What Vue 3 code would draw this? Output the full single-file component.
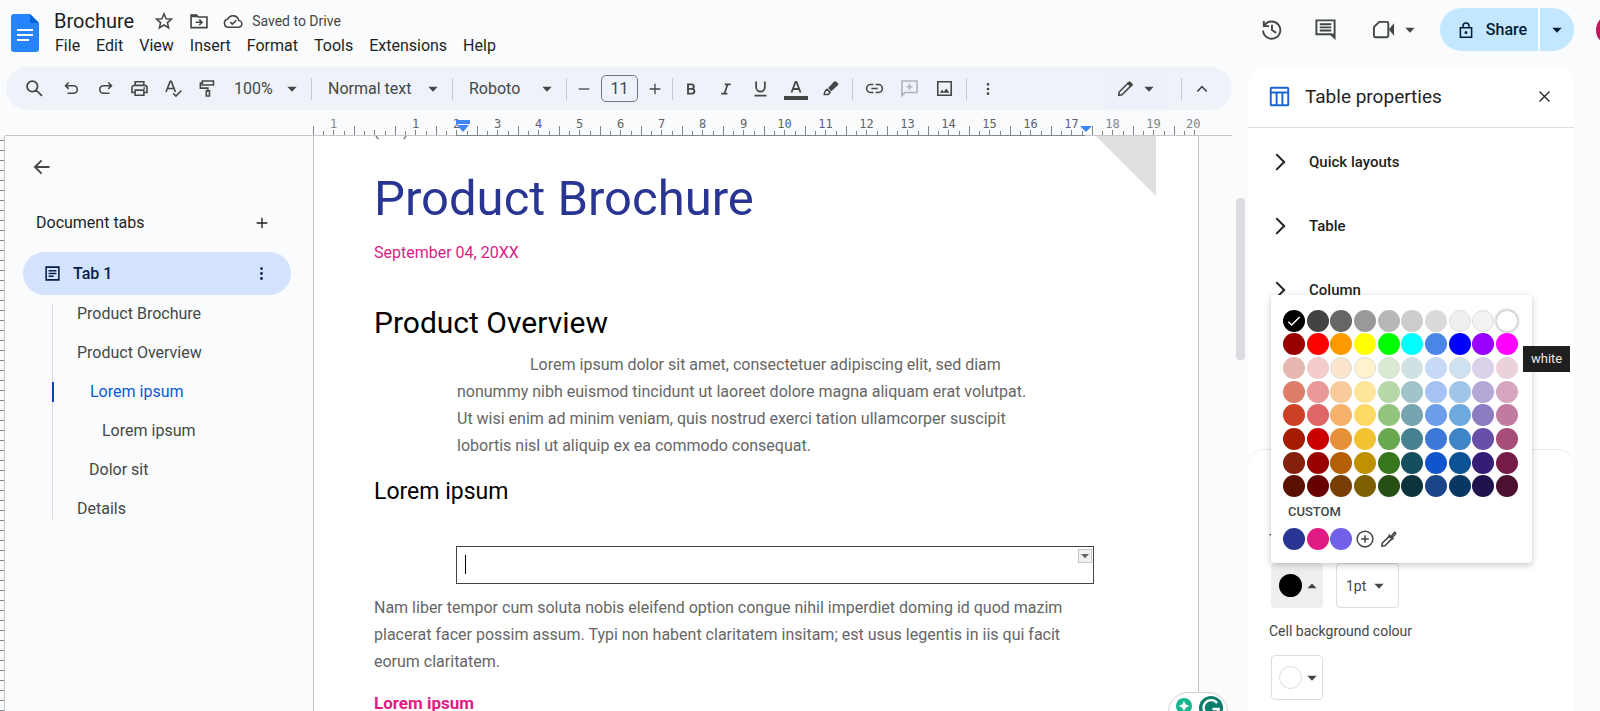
<script setup>
import { h, ref } from 'vue'

// Each glyph sits in a 24 unit box: s = stroked outline, f = filled shape, w = stroke width.
const glyphs = {
  star: { s: 'M12 3.2l2.5 6 6.500.5-4.900 4.200 1.500 6.300L12 16.800l-5.600 3.400 1.500-6.300L3 9.700l6.500-.5z', w: 1.8 },
  move: { s: 'M2.500 5h6.500l2 2.200h10.500v12.800h-19zM8 13.500h7M12.300 10.200l3.300 3.300-3.300 3.300', f: 'M2.500 4.500h7l2 3h-9z', w: 2 },
  cloud: { s: 'M7 19.500h11.500a4 4 0 0 0 .4-8A7 7 0 0 0 5.800 9.600 5 5 0 0 0 7 19.500zM8.800 13.300l2.500 2.500 4.700-4.700', w: 1.900 },
  search: { s: 'M9.500 3.500a6 6 0 1 1 0 12a6 6 0 1 1 0-12zM14 14l6.500 6.500', w: 2 },
  undo: { s: 'M8.500 4.500L4.500 8.500l4 4M5 8.500h9.500a4.800 4.800 0 0 1 0 9.600H7', w: 2 },
  redo: { s: 'M15.500 4.500l4 4-4 4M19 8.500H9.500a4.800 4.800 0 0 0 0 9.600H17', w: 2 },
  print: { s: 'M6.500 8V3.500h11V8M6.500 17H2.500V11a3 3 0 0 1 3-3h13a3 3 0 0 1 3 3v6h-4M6.500 14h11v6.500h-11z', f: 'M17 10.500h2v2h-2z', w: 2 },
  spell: { s: 'M2.500 16.500L7.800 3h1.400l5.300 13.500M4.500 12h8M11.500 18l3.500 3.500L22 14.500', w: 2 },
  paint: { s: 'M5.500 2.500h14v5h-14zM5.500 5H3v6.500h9.500V15M10.500 15h4v6.500h-4z', w: 2 },
  minus: { s: 'M4 12h16', w: 2 },
  plus: { s: 'M4 12h16M12 4v16', w: 2 },
  bold: { s: 'M7.500 5h5.300a3.300 3.300 0 0 1 0 6.800H7.500zM7.500 11.800h6a3.600 3.600 0 0 1 0 7.200h-6z', w: 2.800 },
  italic: { s: 'M10 5h9M5 19h9M14.500 5l-5 14', w: 2.600 },
  underline: { s: 'M6.500 3v7.500a5.500 5.500 0 0 0 11 0V3M4.500 21h15', w: 2.200 },
  colour: { s: 'M7.500 15.500L11.500 5h1l4 10.500M9 12h6', f: 'M0 19h24v4H0z', w: 1.800 },
  marker: { s: 'M4 19.500h5l2.500-2.500-4-4L5 15.500zM7.500 12.500l4 4', f: 'M9 11.500L16.500 3.200q1.200-1 2.500 0l2.300 2.300q1 1.200 0 2.500L13 15.500z', w: 1.800 },
  link: { s: 'M10.500 7H7a5 5 0 0 0 0 10h3.500M13.500 7H17a5 5 0 0 1 0 10h-3.500M8 12h8', w: 2 },
  addComment: { s: 'M2.500 2.500h19v14.500H6.500l-4 4zM12 6v7.500M8.200 9.800h7.600', w: 2 },
  image: { s: 'M3.500 3.500h17v17h-17z', f: 'M6 17.500l3-4 2.200 2.500 3-4 4 5.500z', w: 2 },
  dots: { f: 'M12 3a2 2 0 1 1 0 4a2 2 0 1 1 0-4zM12 10a2 2 0 1 1 0 4a2 2 0 1 1 0-4zM12 17a2 2 0 1 1 0 4a2 2 0 1 1 0-4z' },
  pencil: { s: 'M3.500 20.500l.5-4L16 4.500q1-1 2 0l1.500 1.500q1 1 0 2L7.500 20z', f: 'M14 6l3-3 4.500 4.500-3 3z', w: 2 },
  up: { s: 'M5 15.500l7-7 7 7', w: 2.400 },
  back: { s: 'M21 12H4M11.500 4L3.500 12l8 8', w: 2.200 },
  doc: { s: 'M3 3h18v18H3zM6.500 8h11M6.500 12h11M6.500 16h7', w: 2.200 },
  history: { s: 'M4.800 7.500A9 9 0 1 1 3.200 13M4 3v5.500h5.500M12.500 7v5.500l4.300 3', w: 2 },
  comment: { s: 'M2.500 2.500h19v18l-3.500-3.500h-15.500zM6 6.500h12M6 9.800h12M6 13h12', f: 'M21.500 22v-5.500h-6z', w: 2 },
  video: { s: 'M7.500 4H15.500a1.500 1.500 0 0 1 1.500 1.500v13a1.500 1.500 0 0 1-1.500 1.500H3.500a1.500 1.500 0 0 1-1.500-1.500V9.500z', f: 'M17.500 12l5.500-6.500v13z', w: 2 },
  lock: { s: 'M4.500 9h15v12.500h-15zM8 9V6.500a4 4 0 0 1 8 0V9', f: 'M12 13.200a2 2 0 1 1 0 4a2 2 0 1 1 0-4z', w: 2 },
  table: { s: 'M3 2h18a1 1 0 0 1 1 1v18a1 1 0 0 1-1 1H3a1 1 0 0 1-1-1V3a1 1 0 0 1 1-1zM2 7.500h20M8.700 7.500V22M15.300 7.500V22', w: 2.200 },
  close: { s: 'M4 4l16 16M20 4L4 20', w: 2 },
  right: { s: 'M7.500 2.500l9.500 9.500-9.500 9.500', w: 2.400 },
  check: { s: 'M3.500 13l5 5L20.500 6', w: 2.200 },
  add: { s: 'M12 1.500a10.500 10.500 0 1 1 0 21a10.500 10.500 0 1 1 0-21zM12 7v10M7 12h10', w: 2 },
  dropper: { s: 'M2.500 21.500l.5-4 9.500-9.500 3.500 3.500-9.500 9.500zM11.500 6l6.500 6.500M15 8.500l3.500-4.500q1.300-1.300 2.200-.4t-.5 2.400L16.500 10', w: 2.100 },
  caret: { f: 'M4 8h16l-8 8.500z' },
  caretUp: { f: 'M4 16h16L12 7.500z' },
}

const Icon = ({ name }) => {
  const g = glyphs[name]
  return h('svg', { viewBox: '0 0 24 24', 'aria-hidden': 'true' }, [
    g.f && h('path', { d: g.f, fill: 'currentColor' }),
    g.s && h('path', { d: g.s, fill: 'none', stroke: 'currentColor', 'stroke-width': g.w }),
  ])
}
Icon.props = ['name']

const menus = ['File', 'Edit', 'View', 'Insert', 'Format', 'Tools', 'Extensions', 'Help']
const editTools = [
  ['undo', 'Undo'], ['redo', 'Redo'], ['print', 'Print'], ['spell', 'Spelling'], ['paint', 'Paint format'],
]
const textTools = [
  ['bold', 'Bold'], ['italic', 'Italic'], ['underline', 'Underline'], ['colour', 'Text colour'], ['marker', 'Highlight colour'],
]
const insertTools = [['link', 'Insert link'], ['addComment', 'Add comment'], ['image', 'Insert image']]

const rulerLabels = ['1', '', ...Array.from({ length: 20 }, (_, i) => String(i + 1))]

const outline = [
  { text: 'Product Brochure', level: 1 },
  { text: 'Product Overview', level: 1 },
  { text: 'Lorem ipsum', level: 2, active: true },
  { text: 'Lorem ipsum', level: 3 },
  { text: 'Dolor sit', level: 2 },
  { text: 'Details', level: 1 },
]

const sections = ['Quick layouts', 'Table', 'Column']

const palette = `
000000 434343 666666 999999 b7b7b7 cccccc d9d9d9 efefef f3f3f3 ffffff
980000 ff0000 ff9900 ffff00 00ff00 00ffff 4a86e8 0000ff 9900ff ff00ff
e6b8af f4cccc fce5cd fff2cc d9ead3 d0e0e3 c9daf8 cfe2f3 d9d2e9 ead1dc
dd7e6b ea9999 f9cb9c ffe599 b6d7a8 a2c4c9 a4c2f4 9fc5e8 b4a7d6 d5a6bd
cc4125 e06666 f6b26b ffd966 93c47d 76a5af 6d9eeb 6fa8dc 8e7cc3 c27ba0
a61c00 cc0000 e69138 f1c232 6aa84f 45818e 3c78d8 3d85c6 674ea7 a64d79
85200c 990000 b45f06 bf9000 38761d 134f5c 1155cc 0b5394 351c75 741b47
5b0f00 660000 783f04 7f6000 274e13 0c343d 1c4587 073763 20124d 4c1130`
  .trim().split(/\s+/).map((c) => '#' + c)
const pale = ['#efefef', '#f3f3f3', '#fce5cd', '#fff2cc', '#d9ead3', '#cfe2f3']
const customColours = ['#283593', '#e01b84', '#7061e8']

const borderColour = ref('#000000')
const fontSize = ref('11')
</script>

<template>
  <div class="app">
    <header class="header">
      <svg class="logo" viewBox="0 0 28 38" aria-hidden="true">
        <path d="M3 0h16l9 9v26a3 3 0 0 1-3 3H3a3 3 0 0 1-3-3V3a3 3 0 0 1 3-3z" fill="#2684fc" />
        <path d="M19 0l9 9h-9z" fill="#0066da" />
        <path d="M6 16h16M6 21h16M6 26h12" stroke="#fff" stroke-width="2.200" />
      </svg>
      <div class="heading">
        <div class="title-row">
          <h1>Brochure</h1>
          <button class="plain star" aria-label="Star"><Icon name="star" /></button>
          <button class="plain" aria-label="Move"><Icon name="move" /></button>
          <button class="plain saved"><Icon name="cloud" />Saved to Drive</button>
        </div>
        <nav class="menus">
          <button v-for="m in menus" :key="m" class="plain">{{ m }}</button>
        </nav>
      </div>
      <div class="actions">
        <button class="plain action" aria-label="Version history"><Icon name="history" /></button>
        <button class="plain action" aria-label="Comments"><Icon name="comment" /></button>
        <button class="plain action meet" aria-label="Meet"><Icon name="video" /><Icon name="caret" class="caret" /></button>
        <div class="share">
          <button class="plain share-main"><Icon name="lock" />Share</button>
          <button class="plain share-more" aria-label="Sharing options"><Icon name="caret" class="caret" /></button>
        </div>
        <button class="plain avatar" aria-label="Account"></button>
      </div>
    </header>

    <div class="body">
      <main class="workspace">
        <div class="toolbar" role="toolbar">
          <button class="plain tool search" aria-label="Search menus"><Icon name="search" /></button>
          <button v-for="[n, l] in editTools" :key="n" class="plain tool" :class="n" :aria-label="l"><Icon :name="n" /></button>
          <label class="picker zoom"><select aria-label="Zoom"><option>100%</option></select><Icon name="caret" class="caret" /></label>
          <span class="sep"></span>
          <label class="picker para"><select aria-label="Styles"><option>Normal text</option></select><Icon name="caret" class="caret" /></label>
          <span class="sep"></span>
          <label class="picker font"><select aria-label="Font"><option>Roboto</option></select><Icon name="caret" class="caret" /></label>
          <span class="sep"></span>
          <button class="plain step" aria-label="Decrease font size"><Icon name="minus" /></button>
          <input v-model="fontSize" class="size" aria-label="Font size" />
          <button class="plain step" aria-label="Increase font size"><Icon name="plus" /></button>
          <span class="sep"></span>
          <button v-for="[n, l] in textTools" :key="n" class="plain tool text" :class="n" :aria-label="l"><Icon :name="n" /></button>
          <span class="sep spaced"></span>
          <button v-for="[n, l] in insertTools" :key="n" class="plain tool text" :class="n" :aria-label="l"><Icon :name="n" /></button>
          <span class="sep spaced"></span>
          <button class="plain tool more" aria-label="More"><Icon name="dots" /></button>
          <button class="plain mode" aria-label="Editing mode"><Icon name="pencil" /><Icon name="caret" class="caret" /></button>
          <span class="sep mode-sep"></span>
          <button class="plain tool collapse" aria-label="Hide the menus"><Icon name="up" /></button>
        </div>

        <div class="ruler">
          <span v-for="(l, i) in rulerLabels" :key="i" class="mark" :class="{ outer: i === 0 || i > 18 }">{{ l }}</span>
          <svg class="indent left" viewBox="0 0 14 12" aria-hidden="true"><path d="M0 0h14v4H0zM1 5h12L7 12z" fill="#4285f4" /></svg>
          <svg class="indent right" viewBox="0 0 14 12" aria-hidden="true"><path d="M1 6h12L7 12z" fill="#4285f4" /></svg>
        </div>

        <div class="canvas">
          <div class="v-ruler"></div>
          <aside class="sidebar">
            <button class="plain back" aria-label="Close tabs and outlines"><Icon name="back" /></button>
            <div class="tabs-head">
              <h2>Document tabs</h2>
              <button class="plain" aria-label="Add tab"><Icon name="plus" /></button>
            </div>
            <div class="tab">
              <button class="plain tab-name"><Icon name="doc" />Tab 1</button>
              <button class="plain tab-more" aria-label="Tab options"><Icon name="dots" /></button>
            </div>
            <ul class="outline">
              <li v-for="(o, i) in outline" :key="i" :class="['l' + o.level, { active: o.active }]">
                <a href="#">{{ o.text }}</a>
              </li>
            </ul>
          </aside>

          <article class="page">
            <svg class="fold" viewBox="0 0 60 60" aria-hidden="true"><path d="M0 0h60v60z" fill="#e0e0e0" /></svg>
            <svg class="cut-line" viewBox="0 0 32 4" aria-hidden="true"><path d="M1 0q1 2 2.500 3M31 0q-1 2-2.500 3" fill="none" stroke="#666" stroke-width="1.200" /></svg>
            <h2 class="doc-title">Product Brochure</h2>
            <p class="date">September 04, 20XX</p>
            <h3>Product Overview</h3>
            <p class="indented">Lorem ipsum dolor sit amet, consectetuer adipiscing elit, sed diam<br />nonummy nibh euismod tincidunt ut laoreet dolore magna aliquam erat volutpat.<br />Ut wisi enim ad minim veniam, quis nostrud exerci tation ullamcorper suscipit<br />lobortis nisl ut aliquip ex ea commodo consequat.</p>
            <h4>Lorem ipsum</h4>
            <table class="doc-table">
              <tbody>
                <tr>
                  <td>
                    <div class="cell">
                      <span class="cursor"></span>
                      <button class="plain cell-menu" aria-label="Table options"><Icon name="caret" /></button>
                    </div>
                  </td>
                </tr>
              </tbody>
            </table>
            <p class="copy">Nam liber tempor cum soluta nobis eleifend option congue nihil imperdiet doming id quod mazim<br />placerat facer possim assum. Typi non habent claritatem insitam; est usus legentis in iis qui facit<br />eorum claritatem.</p>
            <h5>Lorem ipsum</h5>
          </article>
          <div class="gutter"><div class="thumb"></div></div>

          <div class="assistant">
            <svg viewBox="0 0 60 40" aria-hidden="true">
              <circle cx="16" cy="14" r="8" fill="#15b68f" />
              <path d="M16 8.500q1 4.500 5.500 5.500-4.500 1-5.500 5.500-1-4.500-5.500-5.500 4.500-1 5.500-5.500z" fill="#fff" />
              <circle cx="43" cy="16" r="12" fill="#0b7d6c" />
              <path d="M49 11a7.500 7.500 0 1 0 1.500 6h-6M50.500 17v5" fill="none" stroke="#fff" stroke-width="2.400" />
            </svg>
          </div>
        </div>
      </main>

      <aside class="panel">
        <div class="panel-head">
          <Icon name="table" class="panel-icon" />
          <h2>Table properties</h2>
          <button class="plain" aria-label="Close"><Icon name="close" /></button>
        </div>
        <div class="sections">
          <button v-for="s in sections" :key="s" class="plain section"><Icon name="right" />{{ s }}</button>
        </div>
        <div class="colour-card">
          <span id="border-label" class="field-label">Table border</span>
          <div class="controls">
            <button class="plain swatch-button open" aria-labelledby="border-label">
              <span class="dot" :style="{ background: borderColour }"></span><Icon name="caretUp" class="caret" />
            </button>
            <label class="picker width"><select aria-label="Border width"><option>1pt</option></select><Icon name="caret" class="caret" /></label>

            <div class="popup">
              <div class="palette">
                <button
                  v-for="c in palette"
                  :key="c"
                  class="plain swatch"
                  :class="{ pale: pale.includes(c), white: c === '#ffffff' }"
                  :style="{ background: c }"
                  :aria-label="c"
                  @click="borderColour = c"
                ><Icon v-if="c === borderColour" name="check" /></button>
              </div>
              <div class="custom-title">CUSTOM</div>
              <div class="palette custom">
                <button v-for="c in customColours" :key="c" class="plain swatch" :style="{ background: c }" :aria-label="c" @click="borderColour = c"></button>
                <button class="plain extra" aria-label="Add a custom colour"><Icon name="add" /></button>
                <button class="plain extra" aria-label="Pick a colour"><Icon name="dropper" /></button>
              </div>
              <div class="tooltip" role="tooltip">white</div>
            </div>
          </div>
          <span id="bg-label" class="field-label second">Cell background colour</span>
          <button class="plain swatch-button" aria-labelledby="bg-label">
            <span class="dot hollow"></span><Icon name="caret" class="caret" />
          </button>
        </div>
      </aside>
    </div>
  </div>
</template>

<style>
body {
  margin: 0;
  background: #f9fbfd;
}
</style>

<style scoped>
* {
  box-sizing: border-box;
}
.app {
  display: flex;
  flex-direction: column;
  height: 100vh;
  overflow: hidden;
  background: #f9fbfd;
  color: #1f1f1f;
  font: 16px/20px Roboto, "Liberation Sans", sans-serif;
}
h1, h2, h3, h4, h5, p, ul {
  margin: 0;
  padding: 0;
  font-weight: 400;
}
.plain {
  display: flex;
  align-items: center;
  justify-content: center;
  margin: 0;
  padding: 0;
  border: 0;
  background: none;
  color: inherit;
  font: inherit;
}
svg {
  display: block;
  flex: none;
}
.caret {
  width: 14px;
  height: 14px;
}

/* Header */
.header {
  display: flex;
  flex: none;
  height: 67px;
  padding: 0 0 0 11px;
  overflow: hidden;
}
.logo {
  width: 28px;
  height: 38px;
  margin-top: 14px;
}
.heading {
  margin-left: 15px;
  padding-top: 9px;
}
.title-row {
  display: flex;
  align-items: center;
  height: 24px;
  color: #444746;
}
.title-row svg {
  width: 20px;
  height: 20px;
}
.title-row .star {
  margin: 0 15px 0 20px;
}
h1 {
  color: #1f1f1f;
  font-size: 20px;
}
.saved {
  gap: 9px;
  margin-left: 14px;
  font-size: 14px;
}
.menus {
  display: flex;
  gap: 16px;
  margin: 3px 0 0 1px;
}
.actions {
  display: flex;
  align-items: center;
  height: 59px;
  margin-left: auto;
  color: #444746;
}
.action {
  width: 54px;
}
.action svg:first-child {
  width: 23px;
  height: 23px;
}
.meet {
  gap: 8px;
  width: 64px;
  margin: 0 14px 0 10px;
}
.share {
  display: flex;
  gap: 2px;
  height: 43px;
  color: #001d35;
  font-weight: 500;
}
.share-main {
  gap: 11px;
  width: 98px;
  padding-left: 6px;
  border-radius: 22px 0 0 22px;
  background: #c2e7ff;
}
.share-main svg {
  width: 18px;
  height: 18px;
}
.share-more {
  width: 34px;
  border-radius: 0 22px 22px 0;
  background: #c2e7ff;
}
.avatar {
  width: 32px;
  height: 32px;
  margin: 0 -28px 0 22px;
  border-radius: 50%;
  background: #c2185b;
}

/* Toolbar */
.body {
  display: flex;
  flex: 1;
  min-height: 0;
  padding-right: 26px;
}
.workspace {
  display: flex;
  flex: 1;
  flex-direction: column;
  min-width: 0;
}
.toolbar {
  display: flex;
  flex: none;
  align-items: center;
  height: 43px;
  margin: 0 16px 0 6px;
  padding: 0 13px 0 8px;
  border-radius: 22px;
  background: #eff3f9;
  color: #444746;
}
.tool {
  width: 34px;
  height: 34px;
}
.tool svg {
  width: 19px;
  height: 19px;
}
.tool.search {
  width: 40px;
}
.tool.search svg {
  width: 21px;
  height: 21px;
}
.tool.text {
  width: 35px;
}
.tool.bold svg, .tool.italic svg, .tool.more svg {
  width: 16px;
  height: 16px;
}
.tool.colour svg {
  width: 24px;
  height: 24px;
}
.tool.addComment {
  color: #b0b3b6;
}
.picker {
  display: grid;
  align-items: center;
  height: 32px;
}
.picker select {
  grid-area: 1 / 1;
  width: 100%;
  height: 100%;
  padding: 0;
  border: 0;
  outline: 0;
  appearance: none;
  background: none;
  color: inherit;
  font: inherit;
}
.picker .caret {
  grid-area: 1 / 1;
  justify-self: end;
  margin-right: 12px;
  pointer-events: none;
}
.zoom {
  width: 87px;
}
.zoom select {
  padding-left: 10px;
}
.para {
  width: 140px;
}
.font {
  width: 113px;
}
.para select, .font select {
  padding-left: 16px;
}
.sep {
  flex: none;
  width: 1px;
  height: 22px;
  background: #c7cacd;
}
.sep.spaced {
  margin: 0 4px;
}
.step {
  width: 34px;
  height: 32px;
}
.step svg {
  width: 16px;
  height: 16px;
}
.size {
  width: 37px;
  height: 27px;
  padding: 0;
  border: 1px solid #747775;
  border-radius: 5px;
  outline: 0;
  background: none;
  color: inherit;
  font: inherit;
  text-align: center;
}
.mode {
  gap: 7px;
  width: 66px;
  height: 38px;
  margin-left: auto;
  border-radius: 4px;
  background: #edf2fa;
}
.mode svg:first-child {
  width: 19px;
  height: 19px;
}
.mode-sep {
  margin: 0 3px 0 12px;
}
.tool.collapse svg {
  width: 16px;
  height: 16px;
}

/* Rulers */
.ruler {
  position: relative;
  display: flex;
  flex: none;
  height: 26px;
  margin: 0 16px 0 5px;
  padding-left: 308px;
  border-bottom: 1px solid #c7c7c7;
}
.ruler::after {
  content: "";
  position: absolute;
  bottom: -1px;
  left: 451px;
  width: 629px;
  height: 1px;
  background: #80868b;
}
.mark {
  flex: none;
  width: 41px;
  padding-top: 6px;
  background:
    linear-gradient(#80868b, #80868b) 0 100% / 1px 9px no-repeat,
    linear-gradient(#80868b, #80868b) 10px 100% / 1px 4px no-repeat,
    linear-gradient(#80868b, #80868b) 20px 100% / 1px 5px no-repeat,
    linear-gradient(#80868b, #80868b) 31px 100% / 1px 4px no-repeat;
  color: #5f6368;
  font: 12px/16px "DejaVu Sans Mono", "Liberation Mono", monospace;
  text-align: center;
}
.mark.outer {
  color: #80868b;
}
.mark:last-of-type {
  width: 21px;
  text-indent: 12px;
}
.indent {
  position: absolute;
  bottom: 3px;
  width: 14px;
  height: 12px;
}
.indent.left {
  left: 451px;
}
.indent.right {
  left: 1074px;
}
.canvas {
  position: relative;
  display: flex;
  flex: 1;
  min-height: 0;
}
.v-ruler {
  flex: none;
  width: 5px;
  border-right: 1px solid #c7c7c7;
  background: repeating-linear-gradient(transparent 0 4px, #80868b 4px 5px, transparent 5px 10px);
}

/* Sidebar */
.sidebar {
  flex: none;
  width: 308px;
  color: #444746;
}
.back {
  width: 24px;
  height: 24px;
  margin: 19px 0 0 25px;
}
.back svg {
  width: 20px;
  height: 20px;
}
.tabs-head {
  display: flex;
  align-items: center;
  justify-content: space-between;
  margin: 34px 43px 0 31px;
  color: #1f1f1f;
}
.tabs-head h2 {
  font-size: 16px;
}
.tabs-head svg {
  width: 16px;
  height: 16px;
}
.tab {
  display: flex;
  align-items: center;
  justify-content: space-between;
  height: 43px;
  margin: 19px 22px 0 18px;
  padding: 0 21px;
  border-radius: 22px;
  background: #d3e3fd;
  color: #041e49;
}
.tab svg {
  width: 17px;
  height: 17px;
}
.tab-name {
  gap: 12px;
  font-weight: 500;
}
.outline {
  display: flex;
  flex-direction: column;
  gap: 19px;
  margin: 9px 0 0 47px;
  border-left: 1px solid #dadce0;
  list-style: none;
}
.outline li.l1 {
  padding-left: 24px;
}
.outline li.l2 {
  padding-left: 36px;
}
.outline li.l3 {
  padding-left: 49px;
}
.outline a {
  color: #444746;
  text-decoration: none;
}
.outline .active {
  margin-left: -1px;
  border-left: 2px solid #0b3fc4;
}
.outline .active a {
  color: #0b57d0;
}

/* Document */
.page {
  position: relative;
  flex: 1;
  min-width: 0;
  overflow: hidden;
  padding: 33px 104px 0 60px;
  border: solid #c7c7c7;
  border-width: 0 1px;
  background: #fff;
  color: #666;
  white-space: nowrap;
}
.fold {
  position: absolute;
  top: 0;
  right: 42px;
  width: 60px;
  height: 60px;
}
.cut-line {
  position: absolute;
  top: 0;
  left: 61px;
  width: 32px;
  height: 4px;
}
.doc-title {
  color: #283593;
  font-size: 49px;
  line-height: 60px;
}
.date {
  margin-top: 12px;
  color: #e01b84;
  line-height: 24px;
}
h3 {
  margin-top: 40px;
  color: #000;
  font-size: 30px;
  line-height: 36px;
}
.indented {
  margin: 10px 0 0 83px;
  line-height: 27px;
  text-indent: 73px;
}
.copy {
  margin-top: 10px;
  line-height: 27px;
}
h4 {
  margin-top: 18px;
  color: #000;
  font-size: 23px;
  line-height: 30px;
}
.doc-table {
  width: calc(100% - 82px);
  margin: 39px 0 0 82px;
  border-collapse: collapse;
}
.doc-table td {
  padding: 0;
  border: 1px solid #444;
}
.cell {
  display: flex;
  justify-content: space-between;
  height: 36px;
  padding: 2px 1px 0 8px;
}
.cursor {
  width: 1px;
  height: 19px;
  margin-top: 6px;
  background: #000;
}
.cell-menu {
  width: 14px;
  height: 14px;
  border: 1px solid #c7c7c7;
  background: #f1f1f1;
}
.cell-menu svg {
  width: 12px;
  height: 12px;
}
h5 {
  margin-top: 15px;
  color: #e01b84;
  font-size: 17px;
  font-weight: 700;
  line-height: 27px;
}
.gutter {
  flex: none;
  width: 49px;
  padding: 62px 3px 0 37px;
}
.thumb {
  width: 9px;
  height: 162px;
  border-radius: 4px;
  background: #dadce0;
}
.assistant {
  position: absolute;
  right: 20px;
  bottom: -21px;
  width: 60px;
  height: 40px;
  border: 1px solid #d0d3d6;
  border-radius: 20px;
  background: #fff;
}
.assistant svg {
  width: 60px;
  height: 40px;
  margin: -1px;
}

/* Table properties */
.panel {
  display: flex;
  flex: none;
  flex-direction: column;
  width: 326px;
  margin-top: 1px;
  border-radius: 16px 16px 0 0;
  background: #fff;
}
.panel-head {
  display: flex;
  flex: none;
  align-items: center;
  height: 60px;
  padding: 0 22px 2px 21px;
  border-bottom: 1px solid #dadce0;
}
.panel-head h2 {
  flex: 1;
  margin-left: 15px;
  font-size: 19px;
}
.panel-icon {
  width: 21px;
  height: 21px;
  color: #1967d2;
}
.panel-head button svg {
  width: 15px;
  height: 15px;
}
.sections {
  flex: none;
  min-height: 321px;
  padding: 2px 21px 0;
}
.section {
  justify-content: flex-start;
  gap: 18px;
  width: 100%;
  height: 64px;
  font-size: 15px;
  font-weight: 500;
}
.section svg {
  width: 22px;
  height: 20px;
}
.colour-card {
  flex: 1;
  padding: 80px 21px 0;
  border-top: 1px solid #e8eaed;
  border-radius: 16px 16px 0 0;
}
.field-label {
  display: block;
  color: #444746;
  font-size: 14px;
}
.field-label.second {
  margin-top: 13px;
}
.controls {
  position: relative;
  display: flex;
  gap: 13px;
  margin-top: 13px;
}
.swatch-button {
  justify-content: flex-end;
  gap: 3px;
  width: 52px;
  height: 45px;
  margin-left: 2px;
  padding-right: 3px;
  border: 1px solid #dadce0;
  border-radius: 4px;
  color: #444746;
}
.colour-card > .swatch-button {
  margin-top: 14px;
}
.swatch-button.open {
  border-color: #eee;
  background: #eee;
}
.dot {
  width: 23px;
  height: 23px;
  border-radius: 50%;
}
.dot.hollow {
  border: 1px solid #dadce0;
}
.width {
  width: 63px;
  height: 45px;
  border: 1px solid #dadce0;
  border-radius: 4px;
  color: #444746;
  font-size: 14px;
}
.width select {
  padding-left: 9px;
}
.popup {
  position: absolute;
  bottom: 100%;
  left: 2px;
  width: 261px;
  padding: 14px 13px 12px 11px;
  border-radius: 4px;
  background: #fff;
  box-shadow: 0 2px 6px rgba(60, 64, 67, 0.3);
}
.palette {
  display: grid;
  grid-template-columns: repeat(10, 1fr);
  grid-auto-rows: 1fr;
  place-items: center;
  height: 189px;
}
.swatch {
  width: 22px;
  height: 22px;
  border-radius: 50%;
  color: #fff;
}
.swatch svg {
  width: 16px;
  height: 16px;
}
.swatch.pale {
  border: 1px solid #dadce0;
}
.swatch.white {
  border: 1px solid #dadce0;
  box-shadow: 0 0 3px rgba(0, 0, 0, 0.4);
}
.custom-title {
  margin: 4px 0 5px 6px;
  color: #444746;
  font-size: 13px;
  font-weight: 500;
}
.palette.custom {
  height: 24px;
}
.extra {
  color: #444746;
}
.extra svg {
  width: 18px;
  height: 18px;
}
.tooltip {
  position: absolute;
  top: 51px;
  left: 252px;
  padding: 3px 8px;
  background: #1f1f1f;
  color: #e8eaed;
  font-size: 13px;
}
</style>
